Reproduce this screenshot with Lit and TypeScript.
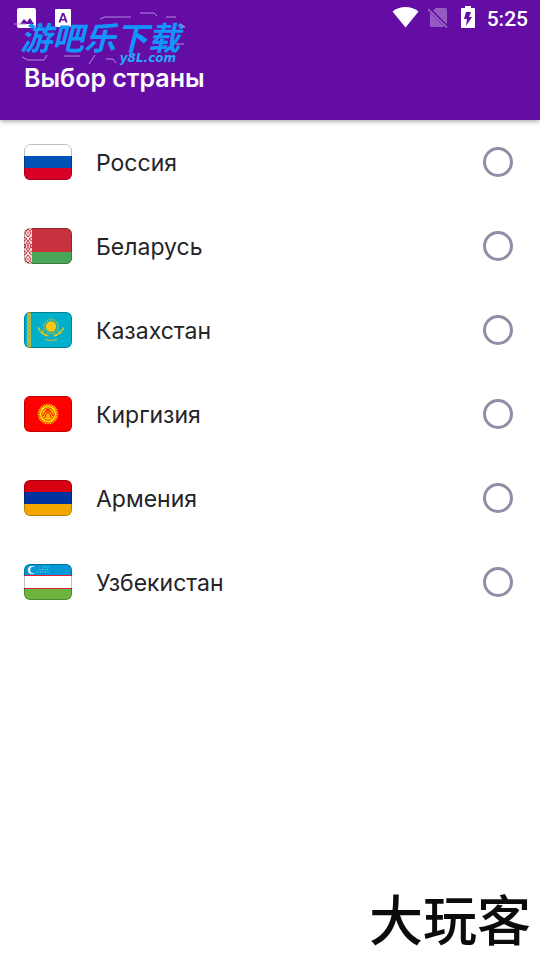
import { LitElement, html, css, svg } from "lit";
import { customElement, property, state } from "lit/decorators.js";

const kazakhRays = Array.from({ length: 24 }, (_, i) => i * 15);

// Flag artwork on a 48x36 canvas, keyed by country code.
const flags: Record<string, unknown> = {
  ru: svg`
    <rect width="48" height="36" fill="#fff"/>
    <rect y="12" width="48" height="12" fill="#0052b4"/>
    <rect y="24" width="48" height="12" fill="#d80027"/>`,
  by: svg`
    <rect width="48" height="36" fill="#c8313e"/>
    <rect y="24" width="48" height="12" fill="#4aa657"/>
    <rect width="8" height="36" fill="#f8dfe1"/>
    <g fill="none" stroke="#c8313e" stroke-width="1">
      <path d="M4 1l3 4-3 4-3-4zM4 12l3 6-3 6-3-6zM4 27l3 4-3 4-3-4z"/>
      <path d="M0 1l2 2M8 1L6 3M0 9l3 2-3 2M8 9l-3 2 3 2M0 16l2 2-2 2M8 16l-2 2 2 2M0 23l3 2-3 2M8 23l-3 2 3 2M0 35l2-2M8 35l-2-2"/>
      <path d="M4 4v2M4 15v6M4 30v2M3 18h2"/>
    </g>`,
  kz: svg`
    <rect width="48" height="36" fill="#00afca"/>
    <rect x="3" width="4" height="36" fill="#b5b046" opacity=".75"/>
    <path d="M3 0l4 4-4 4 4 4-4 4 4 4-4 4 4 4-4 4 4 4M7 0L3 4l4 4-4 4 4 4-4 4 4 4-4 4 4 4-4 4" fill="none" stroke="#fec50c" stroke-width="1" opacity=".7"/>
    <circle cx="27" cy="14.500" r="5.200" fill="#fec50c"/>
    <g stroke="#fec50c" stroke-width=".9" opacity=".75">
      ${kazakhRays.map((a) => svg`<path d="M27 8.400v-1.900" transform="rotate(${a} 27 14.500)"/>`)}
    </g>
    <path d="M14.500 15.500c1 4 4 7 9 8M39.500 15.500c-1 4-4 7-9 8" fill="none" stroke="#fec50c" stroke-width="1.800" stroke-dasharray="4 .6" opacity=".8"/>
    <path d="M18 18c1 4 4 6 7 6M36 18c-1 4-4 6-7 6M21 27c3 2 9 2 12 0" fill="none" stroke="#fec50c" stroke-width="1.200" opacity=".75"/>`,
  kg: svg`
    <rect width="48" height="36" fill="#f00"/>
    <circle cx="24" cy="18" r="9" fill="none" stroke="#ff0" stroke-width="2.500" stroke-dasharray="1 .6" opacity=".8"/>
    <circle cx="24" cy="18" r="8" fill="#ff0"/>
    <circle cx="24" cy="18" r="6.200" fill="none" stroke="#f00" stroke-width="1"/>
    <circle cx="24" cy="18" r="5" fill="#ffb400"/>
    <path d="M19 20c1-3 3-6 7-7M29 20c-1-3-3-6-7-7M21 22c0-3 2-6 6-7M27 22c0-3-2-6-6-7" fill="none" stroke="#f00" stroke-width="1"/>`,
  am: svg`
    <rect width="48" height="12" fill="#d90012"/>
    <rect y="12" width="48" height="12" fill="#0033a0"/>
    <rect y="24" width="48" height="12" fill="#f2a800"/>`,
  uz: svg`
    <rect width="48" height="36" fill="#fff"/>
    <rect width="48" height="12" fill="#0099d6"/>
    <rect y="11" width="48" height="1" fill="#e01f3a"/>
    <rect y="24" width="48" height="1" fill="#e01f3a"/>
    <rect y="25" width="48" height="11" fill="#6db43f"/>
    <circle cx="8" cy="6" r="4" fill="#fff"/>
    <circle cx="9.500" cy="6" r="3.300" fill="#0099d6"/>
    <path d="M18.500 3h6M15.500 5.500h9M13.500 8h11" stroke="#fff" stroke-width="1.200" stroke-dasharray="1 1.500" opacity=".6"/>`,
};

@customElement("country-flag")
class CountryFlag extends LitElement {
  @property() code = "ru";

  static styles = css`
    :host {
      display: block;
      flex: none;
    }
    .flag {
      display: block;
      width: 48px;
      height: 36px;
      border-radius: 6px;
    }
  `;

  render() {
    return html`<svg class="flag" viewBox="0 0 48 36" aria-hidden="true">
      ${flags[this.code]}
      <rect x=".5" y=".5" width="47" height="35" rx="5.500" fill="none" stroke="#000" stroke-opacity=".25"/>
    </svg>`;
  }
}

@customElement("status-bar")
class StatusBar extends LitElement {
  static styles = css`
    :host {
      display: flex;
      align-items: center;
      justify-content: space-between;
      height: 36px;
      padding: 0 12px 0 16px;
      color: #fff;
    }
    .group {
      display: flex;
      align-items: center;
    }
    .notices {
      gap: 17px;
    }
    .system {
      gap: 8px;
    }
    .icon {
      display: block;
    }
    .clock {
      font: 500 21px/36px Roboto, sans-serif;
      padding-top: 2px;
    }
  `;

  render() {
    return html`
      <div class="group notices">
        <svg class="icon" width="22" height="21" viewBox="0 0 22 21" aria-hidden="true">
          <path fill="#fff" fill-rule="evenodd" d="M3 0h15a2 2 0 0 1 2 2v16a2 2 0 0 1-2 2H3a2 2 0 0 1-2-2V2a2 2 0 0 1 2-2zM4 16h14l-4-6-3 4-3-3z"/>
        </svg>
        <svg class="icon" width="18" height="18" viewBox="0 0 18 18" aria-hidden="true">
          <path fill="#fff" fill-rule="evenodd" d="M1 0h14a1 1 0 0 1 1 1v16a1 1 0 0 1-1 1H1a1 1 0 0 1-1-1V1a1 1 0 0 1 1-1zM7 4L3.500 13.500h2l.7-2h3.800l.7 2h2L9.200 4zM8.100 6l1.400 4H6.700z"/>
        </svg>
      </div>
      <div class="group system">
        <svg class="icon" width="28" height="22" viewBox="0 0 28 22" aria-hidden="true">
          <path fill="#fff" d="M13.500 20.500L.5 4.500C4 1.500 8.500 0 13.500 0s9.500 1.500 13 4.500z"/>
        </svg>
        <svg class="icon" width="21" height="22" viewBox="0 0 21 22" aria-hidden="true">
          <g opacity=".32" fill="#fff">
            <path d="M8 1h9.500a1.500 1.500 0 0 1 1.500 1.500v15L5 3.500z"/>
            <path d="M2 5.500v13A1.500 1.500 0 0 0 3.500 20h13z"/>
          </g>
          <path d="M0 2l19 18.500" stroke="#fff" stroke-width="1.600" opacity=".4"/>
        </svg>
        <svg class="icon" width="22" height="24" viewBox="0 0 22 24" aria-hidden="true">
          <path fill="#fff" fill-rule="evenodd" d="M8 0h6v2h3a1 1 0 0 1 1 1v18a1 1 0 0 1-1 1H5a1 1 0 0 1-1-1V3a1 1 0 0 1 1-1h3zM9 6L7 13h3l-1 7 6-9h-3l2-5z"/>
        </svg>
        <time class="clock">5:25</time>
      </div>
    `;
  }
}

@customElement("app-root")
class AppRoot extends LitElement {
  @state() private selected = "";

  private countries = [
    { code: "ru", name: "Россия" },
    { code: "by", name: "Беларусь" },
    { code: "kz", name: "Казахстан" },
    { code: "kg", name: "Киргизия" },
    { code: "am", name: "Армения" },
    { code: "uz", name: "Узбекистан" },
  ];

  static styles = css`
    :host {
      display: block;
      position: relative;
      min-height: 100vh;
      background: #fff;
      color: #232328;
      font-family: Inter, Roboto, sans-serif;
    }
    .header {
      background: #640da5;
      color: #fff;
      box-shadow: 0 1px 5px rgba(0, 0, 0, 0.4);
    }
    .title {
      margin: 0;
      padding: 24px;
      font: 600 25px/36px Inter, Roboto, sans-serif;
    }
    .list {
      margin: 0;
      padding: 0;
      border: 0;
    }
    .row {
      display: flex;
      align-items: center;
      gap: 24px;
      height: 84px;
      padding: 0 27px 0 24px;
      cursor: pointer;
    }
    .name {
      flex: 1;
      font-size: 23px;
      line-height: 32px;
      padding-top: 2px;
    }
    .radio {
      appearance: none;
      flex: none;
      width: 30px;
      height: 30px;
      margin: 0;
      border: 3px solid #8e8ea5;
      border-radius: 50%;
    }
    .radio:checked {
      background: radial-gradient(#640da5 45%, transparent 50%);
      border-color: #640da5;
    }
    .brand {
      position: absolute;
      top: 12px;
      left: 14px;
      display: flex;
      flex-direction: column;
      width: 174px;
      padding-top: 8px;
      color: #1295fb;
      pointer-events: none;
    }
    .circuit {
      position: absolute;
      inset: 0;
    }
    .brand-name {
      padding-left: 6px;
      font: italic 700 32px/32px "Noto Sans CJK SC", sans-serif;
      white-space: nowrap;
    }
    .brand-site {
      align-self: flex-end;
      padding-right: 12px;
      font: italic 700 12px/12px "DejaVu Sans", sans-serif;
      color: #2aa8fb;
    }
    .stamp {
      position: absolute;
      right: 9px;
      bottom: 12px;
      font: 500 54px/60px "Noto Sans CJK SC", sans-serif;
      color: #0b0b0b;
      pointer-events: none;
    }
  `;

  render() {
    return html`
      <header class="header">
        <status-bar></status-bar>
        <h1 class="title">Выбор страны</h1>
      </header>
      <main class="list" role="radiogroup" aria-label="Выбор страны">
        ${this.countries.map(
          (c) => html`
            <label class="row">
              <country-flag code=${c.code}></country-flag>
              <span class="name">${c.name}</span>
              <input
                class="radio"
                type="radio"
                name="country"
                .checked=${this.selected === c.code}
                @change=${() => (this.selected = c.code)}
              />
            </label>
          `
        )}
      </main>
      <div class="brand">
        <svg class="circuit" width="174" height="56" viewBox="0 0 174 56" fill="none" stroke="#b58be0" stroke-width="1" aria-hidden="true">
          <path d="M86 7l5-2h26M126 1h14l3 3M152 5h10M0 12h12M8 45l6 3h16l3-5M50 44h16M92 47h7l3 4M162 32h8M75 52l6-9M166 12l5 3h-4"/>
        </svg>
        <span class="brand-name">游吧乐下载</span>
        <span class="brand-site">y8L.com</span>
      </div>
      <div class="stamp">大玩客</div>
    `;
  }
}
